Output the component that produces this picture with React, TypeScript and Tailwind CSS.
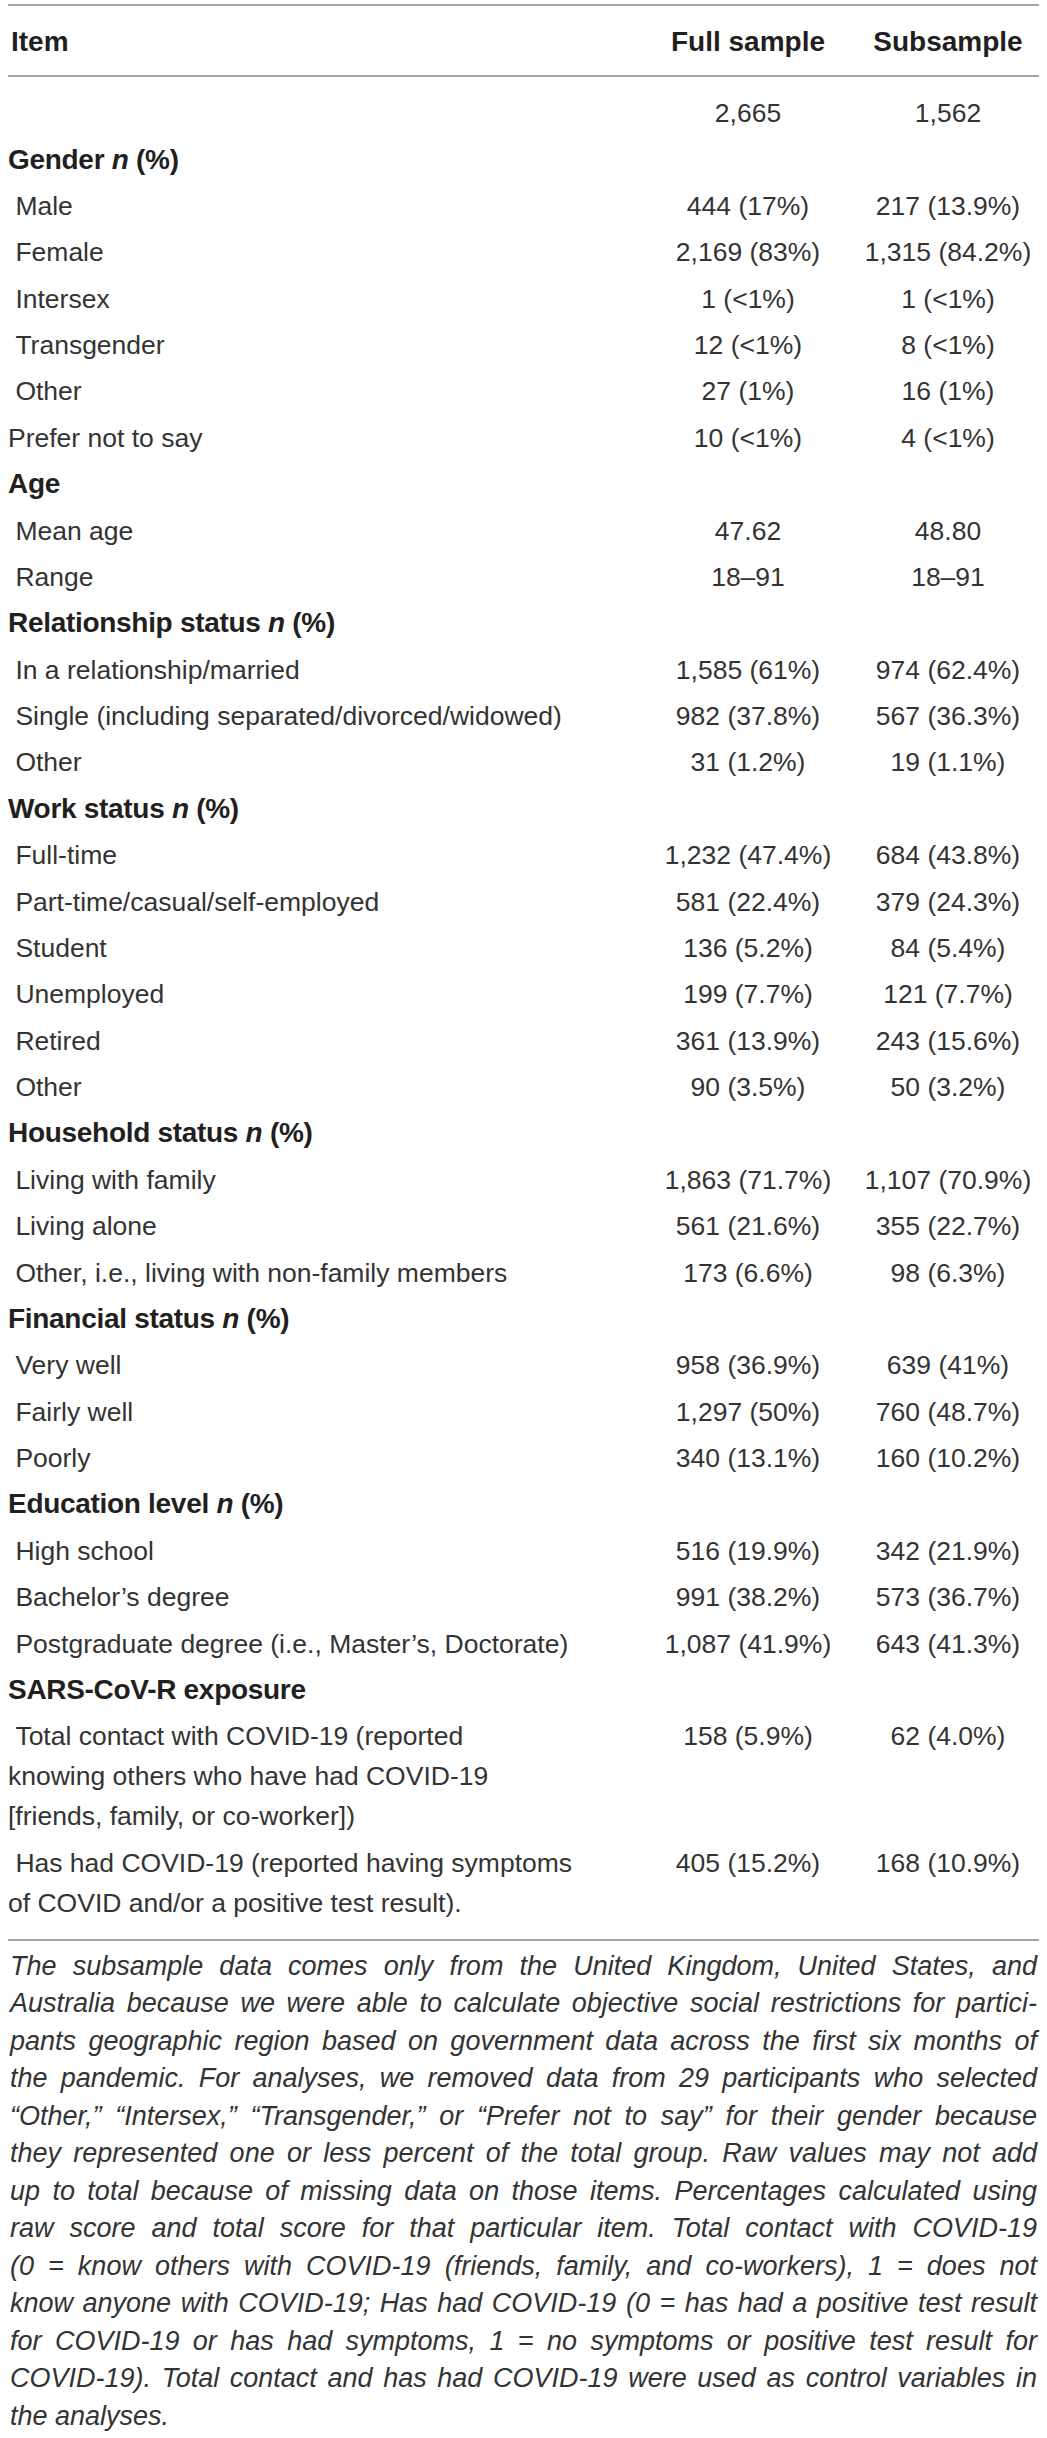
import type { FC, ReactNode } from "react";

type Row = [label: string | string[], full: string, sub: string, noIndent?: boolean];

interface Section {
  title: string;
  showN: boolean;
  rows: Row[];
}

const sections: Section[] = [
  {
    title: "Gender",
    showN: true,
    rows: [
      ["Male", "444 (17%)", "217 (13.9%)"],
      ["Female", "2,169 (83%)", "1,315 (84.2%)"],
      ["Intersex", "1 (<1%)", "1 (<1%)"],
      ["Transgender", "12 (<1%)", "8 (<1%)"],
      ["Other", "27 (1%)", "16 (1%)"],
      ["Prefer not to say", "10 (<1%)", "4 (<1%)", true],
    ],
  },
  {
    title: "Age",
    showN: false,
    rows: [
      ["Mean age", "47.62", "48.80"],
      ["Range", "18–91", "18–91"],
    ],
  },
  {
    title: "Relationship status",
    showN: true,
    rows: [
      ["In a relationship/married", "1,585 (61%)", "974 (62.4%)"],
      ["Single (including separated/divorced/widowed)", "982 (37.8%)", "567 (36.3%)"],
      ["Other", "31 (1.2%)", "19 (1.1%)"],
    ],
  },
  {
    title: "Work status",
    showN: true,
    rows: [
      ["Full-time", "1,232 (47.4%)", "684 (43.8%)"],
      ["Part-time/casual/self-employed", "581 (22.4%)", "379 (24.3%)"],
      ["Student", "136 (5.2%)", "84 (5.4%)"],
      ["Unemployed", "199 (7.7%)", "121 (7.7%)"],
      ["Retired", "361 (13.9%)", "243 (15.6%)"],
      ["Other", "90 (3.5%)", "50 (3.2%)"],
    ],
  },
  {
    title: "Household status",
    showN: true,
    rows: [
      ["Living with family", "1,863 (71.7%)", "1,107 (70.9%)"],
      ["Living alone", "561 (21.6%)", "355 (22.7%)"],
      ["Other, i.e., living with non-family members", "173 (6.6%)", "98 (6.3%)"],
    ],
  },
  {
    title: "Financial status",
    showN: true,
    rows: [
      ["Very well", "958 (36.9%)", "639 (41%)"],
      ["Fairly well", "1,297 (50%)", "760 (48.7%)"],
      ["Poorly", "340 (13.1%)", "160 (10.2%)"],
    ],
  },
  {
    title: "Education level",
    showN: true,
    rows: [
      ["High school", "516 (19.9%)", "342 (21.9%)"],
      ["Bachelor’s degree", "991 (38.2%)", "573 (36.7%)"],
      ["Postgraduate degree (i.e., Master’s, Doctorate)", "1,087 (41.9%)", "643 (41.3%)"],
    ],
  },
  {
    title: "SARS-CoV-R exposure",
    showN: false,
    rows: [
      [
        [
          "Total contact with COVID-19 (reported",
          "knowing others who have had COVID-19",
          "[friends, family, or co-worker])",
        ],
        "158 (5.9%)",
        "62 (4.0%)",
      ],
      [
        ["Has had COVID-19 (reported having symptoms", "of COVID and/or a positive test result)."],
        "405 (15.2%)",
        "168 (10.9%)",
      ],
    ],
  },
];

const noteLines = [
  "The subsample data comes only from the United Kingdom, United States, and",
  "Australia because we were able to calculate objective social restrictions for partici-",
  "pants geographic region based on government data across the first six months of",
  "the pandemic. For analyses, we removed data from 29 participants who selected",
  "“Other,” “Intersex,” “Transgender,” or “Prefer not to say” for their gender because",
  "they represented one or less percent of the total group. Raw values may not add",
  "up to total because of missing data on those items. Percentages calculated using",
  "raw score and total score for that particular item. Total contact with COVID-19",
  "(0 = know others with COVID-19 (friends, family, and co-workers), 1 = does not",
  "know anyone with COVID-19; Has had COVID-19 (0 = has had a positive test result",
  "for COVID-19 or has had symptoms, 1 = no symptoms or positive test result for",
  "COVID-19). Total contact and has had COVID-19 were used as control variables in",
];

const GridRow: FC<{ children: ReactNode; className?: string }> = ({ children, className = "" }) => (
  <div className={`grid grid-cols-[1fr_218px_182px] py-[3.2px] leading-[40px] ${className}`}>
    {children}
  </div>
);

const Label: FC<{ label: string | string[]; noIndent?: boolean }> = ({ label, noIndent }) => {
  const lines = Array.isArray(label) ? label : [label];
  return (
    <div>
      {lines.map((line, i) => (
        <div key={i} className="whitespace-nowrap">
          {i === 0 && !noIndent ? "\u00a0" : ""}
          {line}
        </div>
      ))}
    </div>
  );
};

const App: FC = () => {
  return (
    <div className="min-h-screen bg-white font-['Liberation_Sans',Arial,sans-serif] text-[#333333]">
      <div className="px-2 pt-1">
        {/* header */}
        <div className="border-t-2 border-b-2 border-[#a5a5a5] pt-4 pb-[13px]">
          <div className="grid grid-cols-[1fr_218px_182px] text-[28px] leading-[40px] font-bold text-[#231f20]">
            <div className="pl-[3px]">Item</div>
            <div className="text-center">Full sample</div>
            <div className="text-center">Subsample</div>
          </div>
        </div>

        {/* body */}
        <div className="border-b-2 border-[#a5a5a5] pt-[13px] pb-[13px] text-[26.5px]">
          <GridRow>
            <div />
            <div className="text-center">2,665</div>
            <div className="text-center">1,562</div>
          </GridRow>

          {sections.map((section) => (
            <div key={section.title}>
              <GridRow className="text-[28px] font-bold text-[#231f20] tracking-[-0.3px]">
                <div className="col-span-3 whitespace-nowrap">
                  {section.title}
                  {section.showN && (
                    <>
                      {" "}
                      <i>n</i> (%)
                    </>
                  )}
                </div>
              </GridRow>
              {section.rows.map(([label, full, sub, noIndent], i) => (
                <GridRow key={i}>
                  <Label label={label} noIndent={noIndent} />
                  <div className="text-center whitespace-nowrap">{full}</div>
                  <div className="text-center whitespace-nowrap">{sub}</div>
                </GridRow>
              ))}
            </div>
          ))}
        </div>
      </div>

      {/* table note */}
      <p className="px-[10px] pt-[7px] italic text-[27px] leading-[37.5px] text-[#333333]">
        {noteLines.map((line, i) => (
          <span key={i} className="block whitespace-nowrap text-justify [text-align-last:justify]">
            {line}
          </span>
        ))}
        <span className="block">the analyses.</span>
      </p>
    </div>
  );
};

export default App;
